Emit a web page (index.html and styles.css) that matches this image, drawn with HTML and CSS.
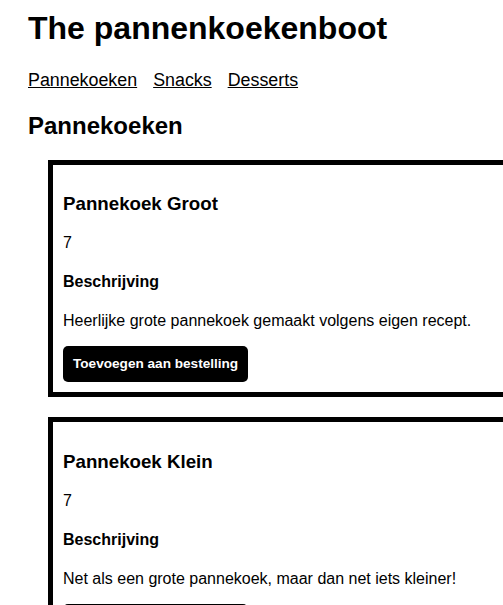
FILE: index.html
```html
<!DOCTYPE html>
<html lang="nl">
<head>
  <meta charset="UTF-8">
  <meta name="viewport" content="width=device-width, initial-scale=1.0">
  <title>The pannenkoekenboot</title>
  <link rel="stylesheet" href="styles.css">
</head>
<body>
  <h1>The pannenkoekenboot</h1>

  <nav class="menu">
    <a href="#pannekoeken">Pannekoeken</a>
    <a href="#snacks">Snacks</a>
    <a href="#desserts">Desserts</a>
  </nav>

  <h2 id="pannekoeken">Pannekoeken</h2>

  <div class="product">
    <h3>Pannekoek Groot</h3>
    <p>7</p>
    <h4>Beschrijving</h4>
    <p>Heerlijke grote pannekoek gemaakt volgens eigen recept.</p>
    <button class="add-btn">Toevoegen aan bestelling</button>
  </div>

  <div class="product">
    <h3>Pannekoek Klein</h3>
    <p>7</p>
    <h4>Beschrijving</h4>
    <p>Net als een grote pannekoek, maar dan net iets kleiner!</p>
    <button class="add-btn">Toevoegen aan bestelling</button>
  </div>
</body>
</html>
```

FILE: styles.css
```css
html, body {
  overflow-x: hidden;
}

body {
  font-family: 'Liberation Sans', Arial, sans-serif;
  color: #000;
  background: #fff;
  margin: 0;
  padding: 10px 28px;
}

h1 {
  font-size: 32px;
  margin: 0 0 22.5px;
}

.menu {
  font-size: 17.85px;
  display: flex;
  gap: 16px;
}

.menu a {
  color: #000;
}

h2 {
  font-size: 24px;
  margin: 21px 0 20px;
}

.product {
  width: 480px;
  border: 5px solid #000;
  padding: 10px;
  margin: 20px 0 20px 20px;
}

.product h3 {
  font-size: 18.72px;
}

.product h4 {
  font-size: 16px;
}

.add-btn {
  font-family: 'Liberation Sans', Arial, sans-serif;
  font-size: 13.6px;
  font-weight: bold;
  line-height: 16px;
  background: #000;
  color: #fff;
  border: none;
  border-radius: 5px;
  padding: 10px;
  cursor: pointer;
}
```
